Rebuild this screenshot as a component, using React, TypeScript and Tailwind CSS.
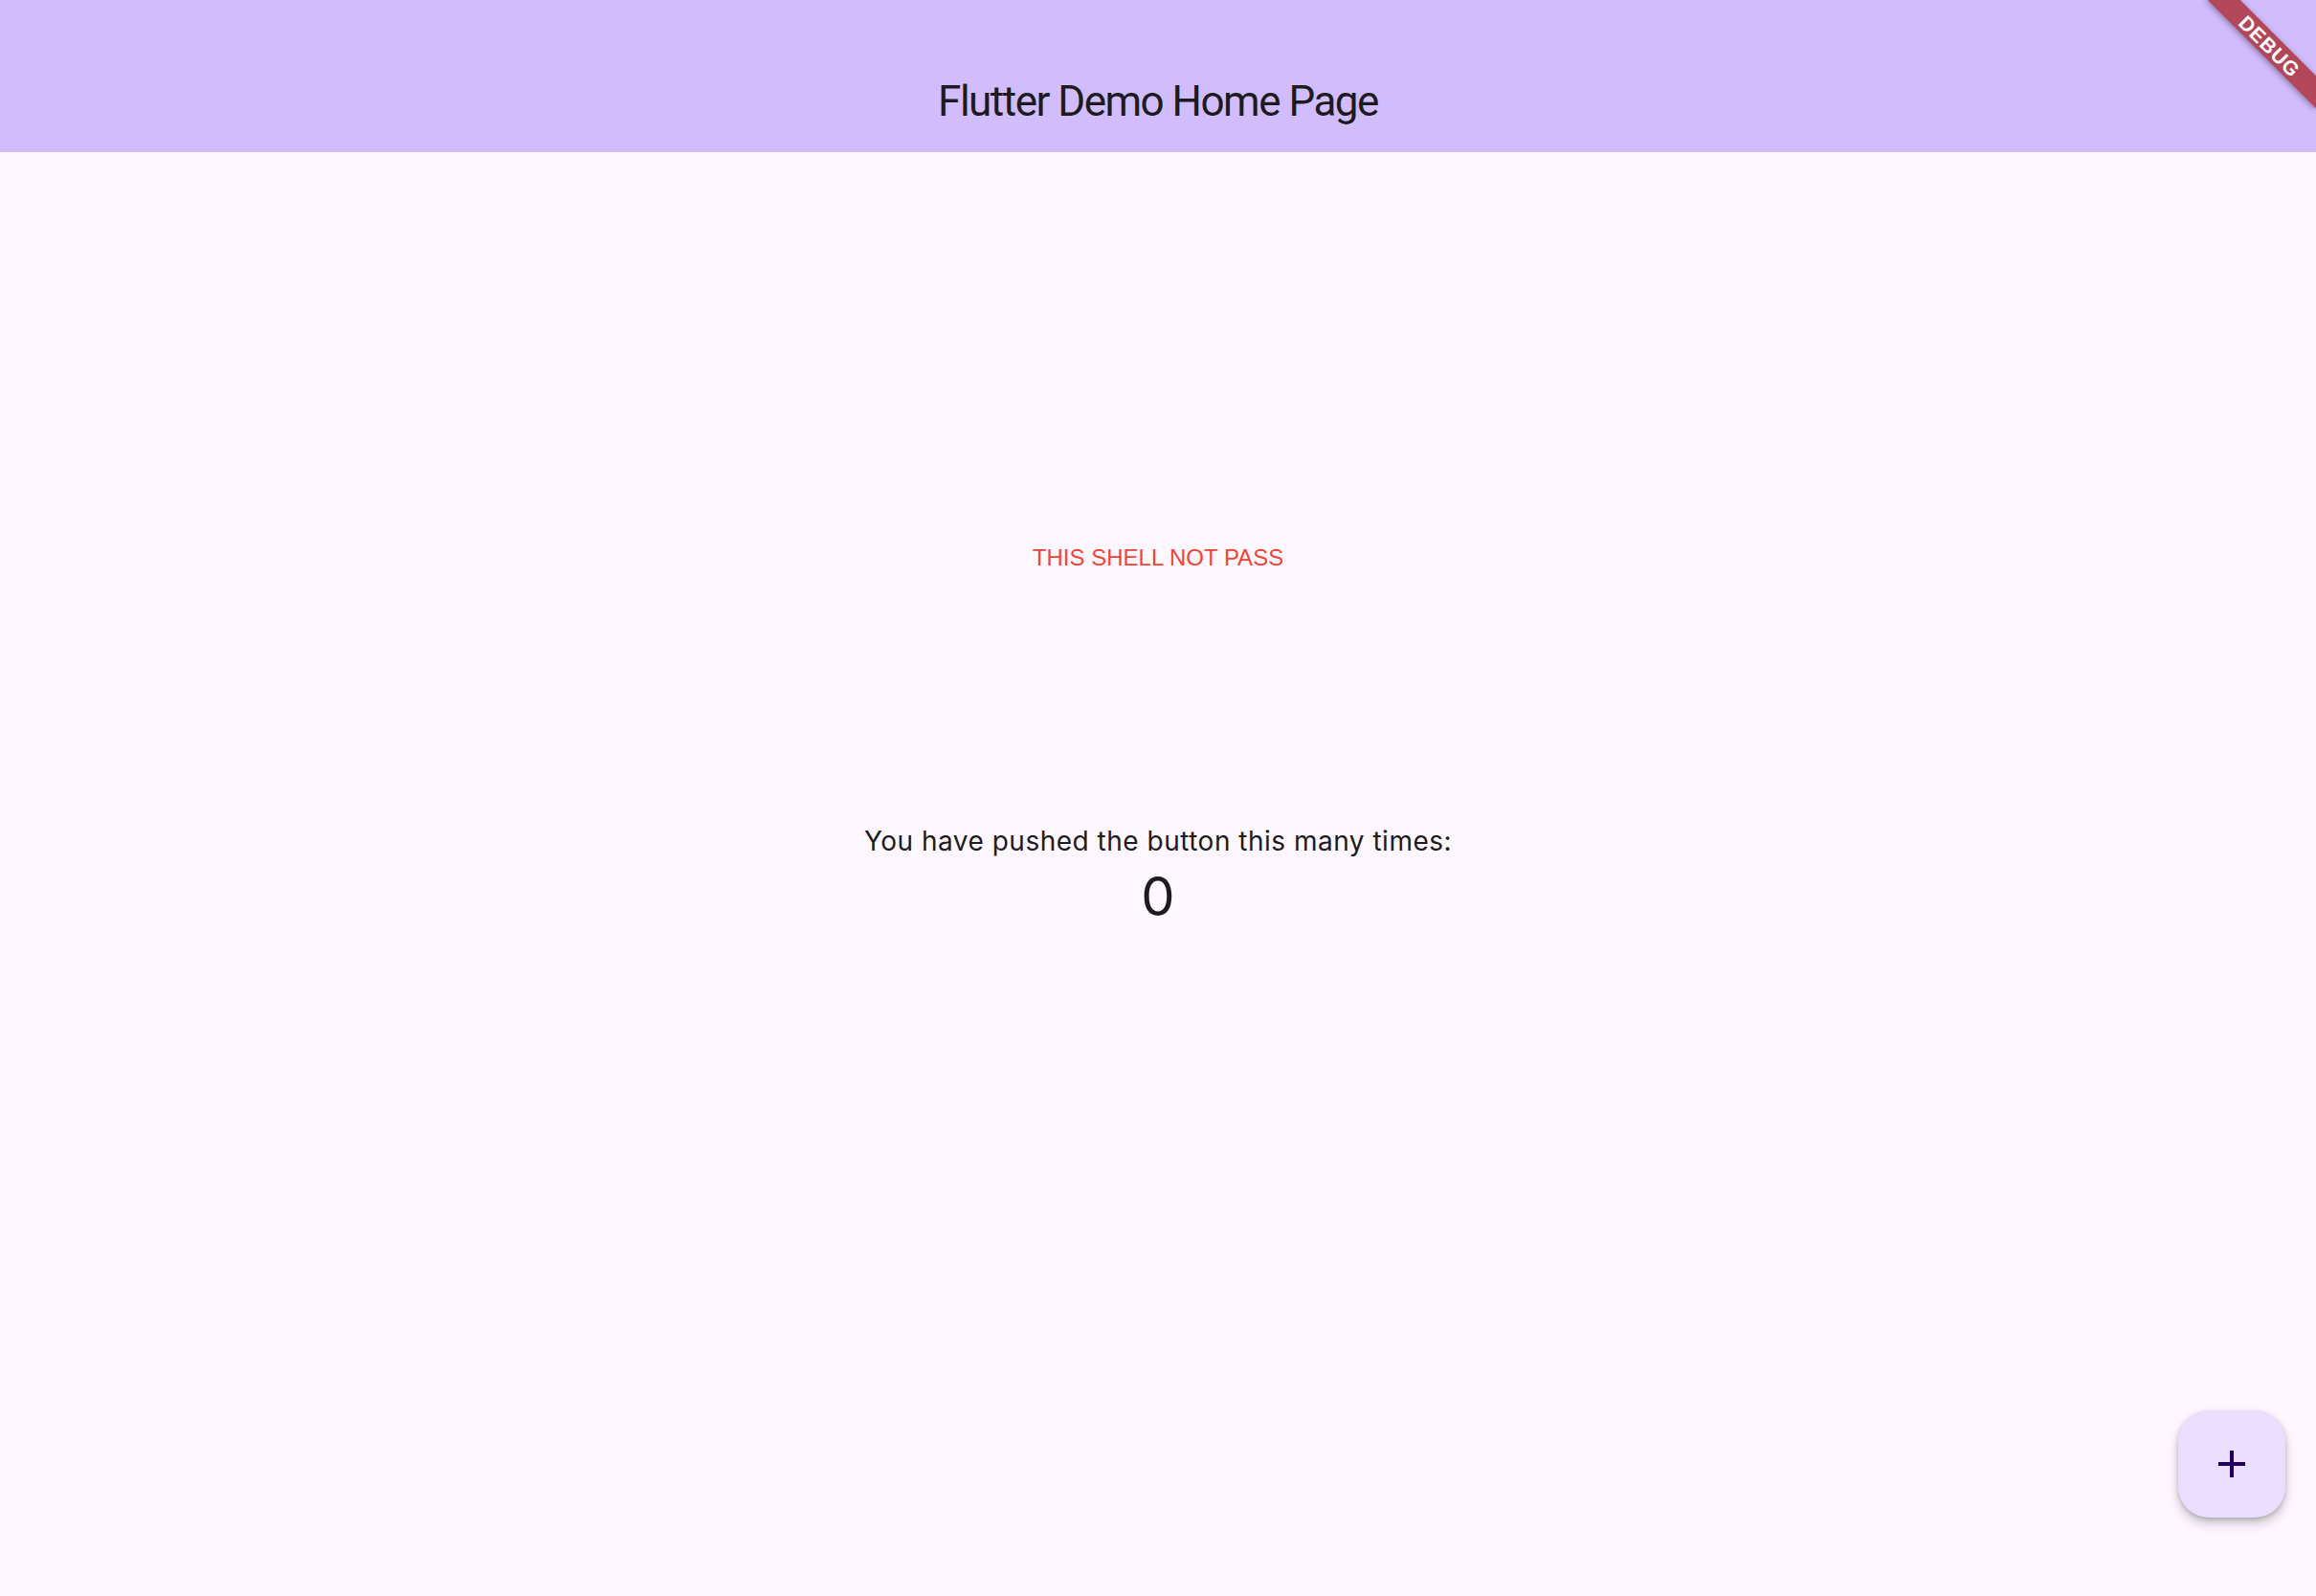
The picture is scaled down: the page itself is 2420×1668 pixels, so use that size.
import { useState } from 'react';

function DebugBanner() {
  return (
    <div className="pointer-events-none absolute right-0 top-0 h-0 w-0 origin-top-left rotate-45">
      <div className="absolute left-[-80px] top-[56px] flex h-[24px] w-[160px] items-center justify-center bg-[#b3475a] shadow-[0_2px_6px_rgba(0,0,0,0.35)]">
        <span className="font-['Liberation_Sans',Arial,sans-serif] text-[21px] font-black leading-none tracking-[1px] text-white">
          DEBUG
        </span>
      </div>
    </div>
  );
}

export default function App() {
  const [count, setCount] = useState(0);

  return (
    <div className="relative flex h-[1668px] w-full flex-col overflow-hidden bg-[#fef7ff] font-['Inter',sans-serif] text-[#1d1b20]">
      <header className="flex h-[159px] shrink-0 items-end bg-[#d1bcfd]">
        <div className="flex h-[112px] w-full items-center justify-center pt-[6px]">
          <h1 className="font-['Roboto',sans-serif] text-[44px] font-normal leading-none tracking-[-1.5px]">
            Flutter Demo Home Page
          </h1>
        </div>
      </header>

      <main className="flex flex-1 flex-col items-center">
        <div className="mt-[410px] font-['Liberation_Sans',Arial,sans-serif] text-[24px] leading-[28px] text-[#f44336]">
          THIS SHELL NOT PASS
        </div>
        <div className="mt-[262px] flex flex-col items-center">
          <div className="text-[28px] leading-[40px] tracking-[0.5px]">You have pushed the button this many times:</div>
          <div className="mt-[2px] text-[56px] leading-[72px]">{count}</div>
        </div>
      </main>

      <button
        type="button"
        onClick={() => setCount(count + 1)}
        className="absolute bottom-[82px] right-[32px] flex h-[112px] w-[112px] items-center justify-center rounded-[32px] bg-[#eaddff] shadow-[0_6px_12px_rgba(0,0,0,0.22),0_2px_4px_rgba(0,0,0,0.15)]"
      >
        <svg width="48" height="48" viewBox="0 0 24 24" fill="#21005d">
          <path d="M19 13h-6v6h-2v-6H5v-2h6V5h2v6h6v2z" />
        </svg>
      </button>

      <DebugBanner />
    </div>
  );
}
